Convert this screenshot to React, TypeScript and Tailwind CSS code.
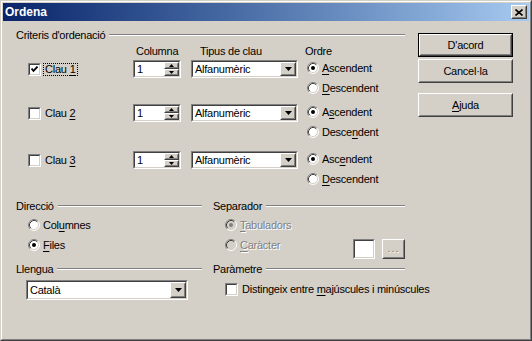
import React from "react";

const FONT = "font-['Liberation_Sans',Arial,sans-serif]";

type BoxProps = { className?: string; inner?: string; children?: React.ReactNode };

// 3D inset edge (text fields, check boxes)
function Sunken({ className = "", inner = "", children }: BoxProps) {
  return (
    <div className={`border border-t-[#808080] border-l-[#808080] border-r-white border-b-white ${className}`}>
      <div className={`h-full w-full border border-t-[#404040] border-l-[#404040] border-r-[#d4d0c8] border-b-[#d4d0c8] ${inner}`}>
        {children}
      </div>
    </div>
  );
}

// 3D raised edge (buttons)
function Raised({ className = "", inner = "", children }: BoxProps) {
  return (
    <div className={`border border-t-white border-l-white border-r-[#404040] border-b-[#404040] ${className}`}>
      <div className={`h-full w-full border border-t-[#d4d0c8] border-l-[#d4d0c8] border-r-[#808080] border-b-[#808080] bg-[#d4d0c8] ${inner}`}>
        {children}
      </div>
    </div>
  );
}

function Checkbox({ checked = false }: { checked?: boolean }) {
  return (
    <Sunken className="w-[13px] h-[13px] shrink-0" inner="bg-white flex items-center justify-center">
      {checked && (
        <svg width="7" height="7" viewBox="0 0 7 7">
          <path d="M0.5 2.5 L2.5 4.8 L6.6 0.6" stroke="#000" strokeWidth="1.9" fill="none" />
        </svg>
      )}
    </Sunken>
  );
}

function Radio({ checked = false, disabled = false }: { checked?: boolean; disabled?: boolean }) {
  return (
    <svg width="12" height="12" viewBox="0 0 12 12" className="shrink-0">
      <circle cx="6" cy="6" r="5" fill={disabled ? "#d4d0c8" : "#fff"} />
      <path d="M2.11 9.89 A5.5 5.5 0 0 1 9.89 2.11" stroke="#808080" fill="none" />
      <path d="M9.89 2.11 A5.5 5.5 0 0 1 2.11 9.89" stroke="#fff" fill="none" />
      <path d="M2.82 9.18 A4.5 4.5 0 0 1 9.18 2.82" stroke="#404040" fill="none" />
      <path d="M9.18 2.82 A4.5 4.5 0 0 1 2.82 9.18" stroke="#d4d0c8" fill="none" />
      {checked && <circle cx="6" cy="6" r="2" fill={disabled ? "#808080" : "#000"} />}
    </svg>
  );
}

function RadioRow({ checked, disabled, children }: { checked?: boolean; disabled?: boolean; children: React.ReactNode }) {
  return (
    <div className="flex items-center h-[20px]">
      <Radio checked={checked} disabled={disabled} />
      <span className={`ml-[3px] ${disabled ? "text-[#808080] [text-shadow:1px_1px_0_#fff]" : ""}`}>{children}</span>
    </div>
  );
}

function U({ children }: { children: React.ReactNode }) {
  return <span className="underline underline-offset-[2px]">{children}</span>;
}

function Header({ children }: { children: React.ReactNode }) {
  return (
    <div className="flex items-center h-[14px]">
      <span className="whitespace-nowrap">{children}</span>
      <div className="ml-[4px] flex-1 border-t border-t-[#808080] border-b border-b-white" />
    </div>
  );
}

function Arrow() {
  return (
    <svg width="7" height="4" viewBox="0 0 7 4">
      <polygon points="0,0 7,0 3.5,4" fill="#000" />
    </svg>
  );
}

function Dropdown({ value, className = "" }: { value: string; className?: string }) {
  return (
    <Sunken className={className} inner="bg-white flex">
      <span className="flex-1 flex items-center pl-[2px]">{value}</span>
      <Raised className="w-[16px] h-full" inner="flex items-center justify-center">
        <Arrow />
      </Raised>
    </Sunken>
  );
}

function Spin() {
  return (
    <Sunken className="w-[48px] h-[18px]" inner="bg-white flex">
      <span className="flex-1 flex items-center pl-[2px]">1</span>
      <div className="w-[15px] flex flex-col">
        <Raised className="h-[7px]" inner="flex items-center justify-center">
          <svg width="5" height="3" viewBox="0 0 5 3">
            <polygon points="2.5,0 5,3 0,3" fill="#000" />
          </svg>
        </Raised>
        <Raised className="h-[7px]" inner="flex items-center justify-center">
          <svg width="5" height="3" viewBox="0 0 5 3">
            <polygon points="0,0 5,0 2.5,3" fill="#000" />
          </svg>
        </Raised>
      </div>
    </Sunken>
  );
}

const keys = [
  { n: "1", checked: true, asc: <><U>A</U>scendent</>, desc: <><U>D</U>escendent</>, h: "h-[44px]" },
  { n: "2", checked: false, asc: <>A<U>s</U>cendent</>, desc: <>Desce<U>n</U>dent</>, h: "h-[47px]" },
  { n: "3", checked: false, asc: <>Asc<U>e</U>ndent</>, desc: <><U>D</U>escendent</>, h: "h-[50px]" },
];

export default function App() {
  return (
    <div className={`w-[532px] h-[341px] bg-[#d4d0c8] text-[11px] tracking-[-0.25px] text-black leading-none ${FONT}`}>
      <div className="h-full w-full border border-t-[#d4d0c8] border-l-[#d4d0c8] border-r-[#404040] border-b-[#404040]">
        <div className="h-full w-full border border-t-white border-l-white border-r-[#808080] border-b-[#808080] p-px flex flex-col">
          {/* Title bar */}
          <div className="h-[18px] shrink-0 flex items-center bg-linear-to-r from-[#0a246a] to-[#a6caf0] pl-[2px] pr-[2px]">
            <span className="flex-1 text-white font-bold text-[12px] tracking-normal">Ordena</span>
            <Raised className="w-[16px] h-[14px]" inner="flex items-center justify-center">
              <svg width="8" height="7" viewBox="0 0 8 7">
                <path d="M0.5 0.5 L7.5 6.5 M7.5 0.5 L0.5 6.5" stroke="#000" strokeWidth="1.6" />
              </svg>
            </Raised>
          </div>

          <div className="flex flex-1">
            {/* Left area */}
            <div className="w-[402px] pl-[13px] pt-[7px]">
              <Header>Criteris d'ordenació</Header>

              <div className="mt-[2px] flex h-[14px] items-center">
                <div className="w-[120px]" />
                <span className="w-[64px]">Columna</span>
                <span className="w-[105px]">Tipus de clau</span>
                <span>Ordre</span>
              </div>

              {keys.map((k) => (
                <div key={k.n} className={`flex items-start ${k.h}`}>
                  <div className="w-[117px] pl-[12px] mt-[2px] h-[18px] flex items-center">
                    <Checkbox checked={k.checked} />
                    {k.checked ? (
                      <span className="ml-[2px] px-[1px] h-[13px] flex items-center border border-dotted border-black">
                        Clau <span className="ml-[3px]"><U>{k.n}</U></span>
                      </span>
                    ) : (
                      <span className="ml-[4px]">
                        Clau <U>{k.n}</U>
                      </span>
                    )}
                  </div>
                  <div className="mt-[2px]">
                    <Spin />
                  </div>
                  <Dropdown value="Alfanumèric" className="ml-[10px] mt-[2px] w-[107px] h-[18px]" />
                  <div className="ml-[9px] flex flex-col">
                    <RadioRow checked>{k.asc}</RadioRow>
                    <RadioRow>{k.desc}</RadioRow>
                  </div>
                </div>
              ))}

              <div className="grid grid-cols-[186px_192px] gap-x-[11px]">
                <div>
                  <Header>Direcció</Header>
                  <div className="mt-[2px] pl-[12px]">
                    <RadioRow>Col<U>u</U>mnes</RadioRow>
                    <RadioRow checked><U>F</U>iles</RadioRow>
                  </div>
                  <div className="mt-[7px]">
                    <Header>Llengua</Header>
                  </div>
                  <Dropdown value="Català" className="ml-[10px] mt-[4px] w-[162px] h-[20px]" />
                </div>

                <div>
                  <Header>Separador</Header>
                  <div className="mt-[2px] pl-[12px]">
                    <RadioRow checked disabled><U>T</U>abuladors</RadioRow>
                    <div className="flex items-start h-[20px]">
                      <div className="w-[130px]">
                        <RadioRow disabled><U>C</U>aràcter</RadioRow>
                      </div>
                      <Sunken className="mt-[4px] w-[22px] h-[20px] shrink-0" inner="bg-white" />
                      <Raised className="ml-[7px] mt-[4px] w-[23px] h-[20px] shrink-0" inner="flex items-center justify-center text-[#808080] [text-shadow:1px_1px_0_#fff]">
                        <span className="tracking-[1px] pb-[2px]">...</span>
                      </Raised>
                    </div>
                  </div>
                  <div className="mt-[7px]">
                    <Header>Paràmetre</Header>
                  </div>
                  <div className="mt-[3px] pl-[12px] flex items-center h-[20px]">
                    <Checkbox />
                    <span className="ml-[4px] whitespace-nowrap">
                      Distingeix entre <U>m</U>ajúscules i minúscules
                    </span>
                  </div>
                </div>
              </div>
            </div>

            {/* Buttons */}
            <div className="ml-[13px] pt-[12px] w-[95px] flex flex-col">
              <div className="border border-black h-[24px]">
                <Raised className="h-full" inner="flex items-center justify-center">
                  D'acord
                </Raised>
              </div>
              <Raised className="mt-[2px] h-[24px]" inner="flex items-center justify-center">
                Cancel·la
              </Raised>
              <Raised className="mt-[10px] h-[24px]" inner="flex items-center justify-center">
                <span>
                  <U>A</U>juda
                </span>
              </Raised>
            </div>
          </div>
        </div>
      </div>
    </div>
  );
}
